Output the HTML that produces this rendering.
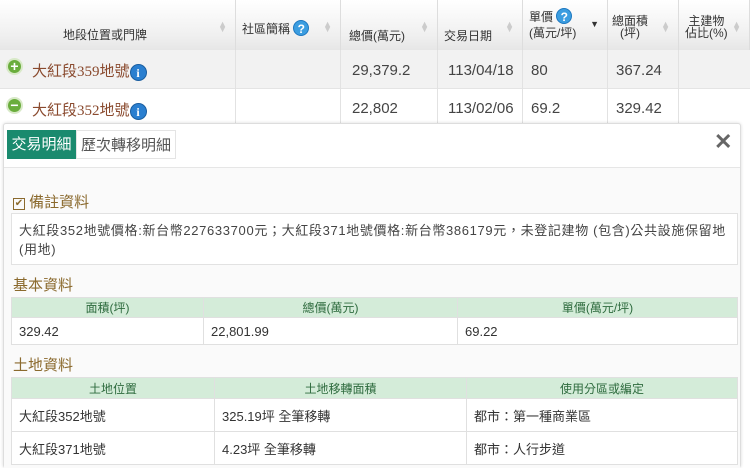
<!DOCTYPE html>
<html><head><meta charset="utf-8"><style>
*{box-sizing:border-box;margin:0;padding:0}
body{width:750px;height:468px;overflow:hidden;background:#fff;font-family:"Liberation Sans","Noto Sans CJK TC",sans-serif;color:#333;position:relative}
.abs{position:absolute}
.th{position:absolute;top:0;height:50px;background:linear-gradient(#fff,#f0f0f0 70%,#e6e6e6);border-right:1px solid #ddd;font-size:12px;color:#333}
.sort{position:absolute;right:8px;top:22px;font-size:9px;color:#ccc;line-height:5px}
.cell{position:absolute;border-right:1px solid #e2e2e2;font-size:15px;color:#444}
.q{display:inline-block;width:16px;height:16px;border-radius:50%;background:#3b9de0;color:#fff;font-size:12px;font-weight:bold;text-align:center;line-height:16px;border:1px solid #1e78c0}
.ib{display:inline-block;width:17px;height:17px;border-radius:50%;background:#2a7fd0;color:#fff;font-size:12px;font-weight:bold;text-align:center;line-height:16px;border:1px solid #1a5ea0;vertical-align:middle;font-family:"Liberation Serif",serif}
.pm{position:absolute;left:6px;width:17px;height:17px;border-radius:50%;background:#6aad3c;border:2px solid #d8e9c8;color:#fff;font-size:14px;font-weight:bold;text-align:center;line-height:12px}
.h{position:absolute;left:13px;font-size:15px;color:#8b6a2e}
table{position:absolute;border-collapse:collapse;font-size:13px;color:#333;background:#fff}
table th{background:#d4ecd9;color:#2e6b3e;font-weight:normal;font-size:12px;height:20px;border:1px solid #e0e0e0}
table td{border:1px solid #e0e0e0;padding-left:7px}
</style></head><body>
<div class="th" style="left:0;width:236px"><span class="abs" style="left:63px;top:26px">地段位置或門牌</span><span class="sort">▲<br>▼</span></div>
<div class="th" style="left:236px;width:105px"><span class="abs" style="left:6px;top:20px">社區簡稱 <span class="q">?</span></span><span class="sort">▲<br>▼</span></div>
<div class="th" style="left:341px;width:97px"><span class="abs" style="left:8px;top:27px">總價(萬元)</span><span class="sort">▲<br>▼</span></div>
<div class="th" style="left:438px;width:85px"><span class="abs" style="left:6px;top:27px">交易日期</span><span class="sort">▲<br>▼</span></div>
<div class="th" style="left:523px;width:85px"><span class="abs" style="left:6px;top:8px;line-height:16px">單價 <span class="q">?</span><br>(萬元/坪)</span><span class="sort" style="color:#333">▼</span></div>
<div class="th" style="left:608px;width:71px"><span class="abs" style="left:4px;top:15px;line-height:12px;text-align:center">總面積<br>(坪)</span><span class="sort">▲<br>▼</span></div>
<div class="th" style="left:679px;width:71px"><span class="abs" style="left:6px;top:15px;line-height:12px;text-align:center">主建物<br>佔比(%)</span><span class="sort">▲<br>▼</span></div>
<div class="abs" style="left:0;top:50px;width:750px;height:39px;background:#f2f2f2;border-bottom:1px solid #e4e4e4"></div>
<div class="pm" style="top:58px">+</div>
<div class="pm" style="top:97px">−</div>
<div class="abs" style="left:32px;top:60px;font-size:15px;color:#8a4a2e">大紅段<span style="font-family:'Liberation Serif',serif">359</span>地號<span class="ib">i</span></div>
<div class="abs" style="left:32px;top:99px;font-size:15px;color:#8a4a2e">大紅段<span style="font-family:'Liberation Serif',serif">352</span>地號<span class="ib">i</span></div>
<div class="cell" style="left:0;top:50px;width:236px;height:74px"></div>
<div class="cell" style="left:236px;top:50px;width:105px;height:74px"></div>
<div class="cell" style="left:341px;top:50px;width:97px;height:74px"><div class="abs" style="left:11px;top:12px">29,379.2</div><div class="abs" style="left:11px;top:50px">22,802</div></div>
<div class="cell" style="left:438px;top:50px;width:85px;height:74px"><div class="abs" style="left:10px;top:12px">113/04/18</div><div class="abs" style="left:10px;top:50px">113/02/06</div></div>
<div class="cell" style="left:523px;top:50px;width:85px;height:74px"><div class="abs" style="left:8px;top:12px">80</div><div class="abs" style="left:8px;top:50px">69.2</div></div>
<div class="cell" style="left:608px;top:50px;width:71px;height:74px"><div class="abs" style="left:8px;top:12px">367.24</div><div class="abs" style="left:8px;top:50px">329.42</div></div>
<div class="abs" style="left:3px;top:123px;width:738px;height:345px;background:#fff;border:1px solid #ddd;border-radius:3px;box-shadow:0 0 3px rgba(0,0,0,.15)"></div>
<div class="abs" style="left:4px;top:167px;width:736px;height:301px;background:#fafafa;border-top:1px solid #e6e6e6"></div>
<div class="abs" style="left:7px;top:130px;width:69px;height:29px;background:#1a8a6e;color:#fff;font-size:15px;line-height:29px;text-align:center">交易明細</div>
<div class="abs" style="left:76px;top:130px;width:100px;height:29px;background:#fff;color:#555;font-size:15px;line-height:29px;text-align:center;border:1px solid #e4e4e4">歷次轉移明細</div>
<div class="abs" style="left:714px;top:129px;font-size:22px;color:#666;font-weight:bold">✕</div>
<div class="h" style="top:191px"><span style="display:inline-block;width:12px;height:12px;border:1px solid #8b6a2e;font-size:10px;line-height:10px;text-align:center;vertical-align:1px">✔</span> 備註資料</div>
<div class="abs" style="left:11px;top:213px;width:727px;height:52px;background:#fff;border:1px solid #e2e2e2;font-size:13px;color:#444;padding:7px 7px;line-height:19px;letter-spacing:.65px">大紅段352地號價格:新台幣227633700元；大紅段371地號價格:新台幣386179元，未登記建物 (包含)公共設施保留地<br>(用地)</div>
<div class="h" style="top:274px">基本資料</div>
<table style="left:11px;top:297px;width:727px">
<tr><th style="width:192px">面積(坪)</th><th style="width:254px">總價(萬元)</th><th>單價(萬元/坪)</th></tr>
<tr><td style="height:27px">329.42</td><td>22,801.99</td><td>69.22</td></tr></table>
<div class="h" style="top:354px">土地資料</div>
<table style="left:11px;top:377px;width:727px">
<tr><th style="width:203px;height:21px">土地位置</th><th style="width:252px">土地移轉面積</th><th>使用分區或編定</th></tr>
<tr><td style="height:33px">大紅段352地號</td><td>325.19坪 全筆移轉</td><td>都市：第一種商業區</td></tr>
<tr><td style="height:33px">大紅段371地號</td><td>4.23坪 全筆移轉</td><td>都市：人行步道</td></tr></table>
</body></html>
